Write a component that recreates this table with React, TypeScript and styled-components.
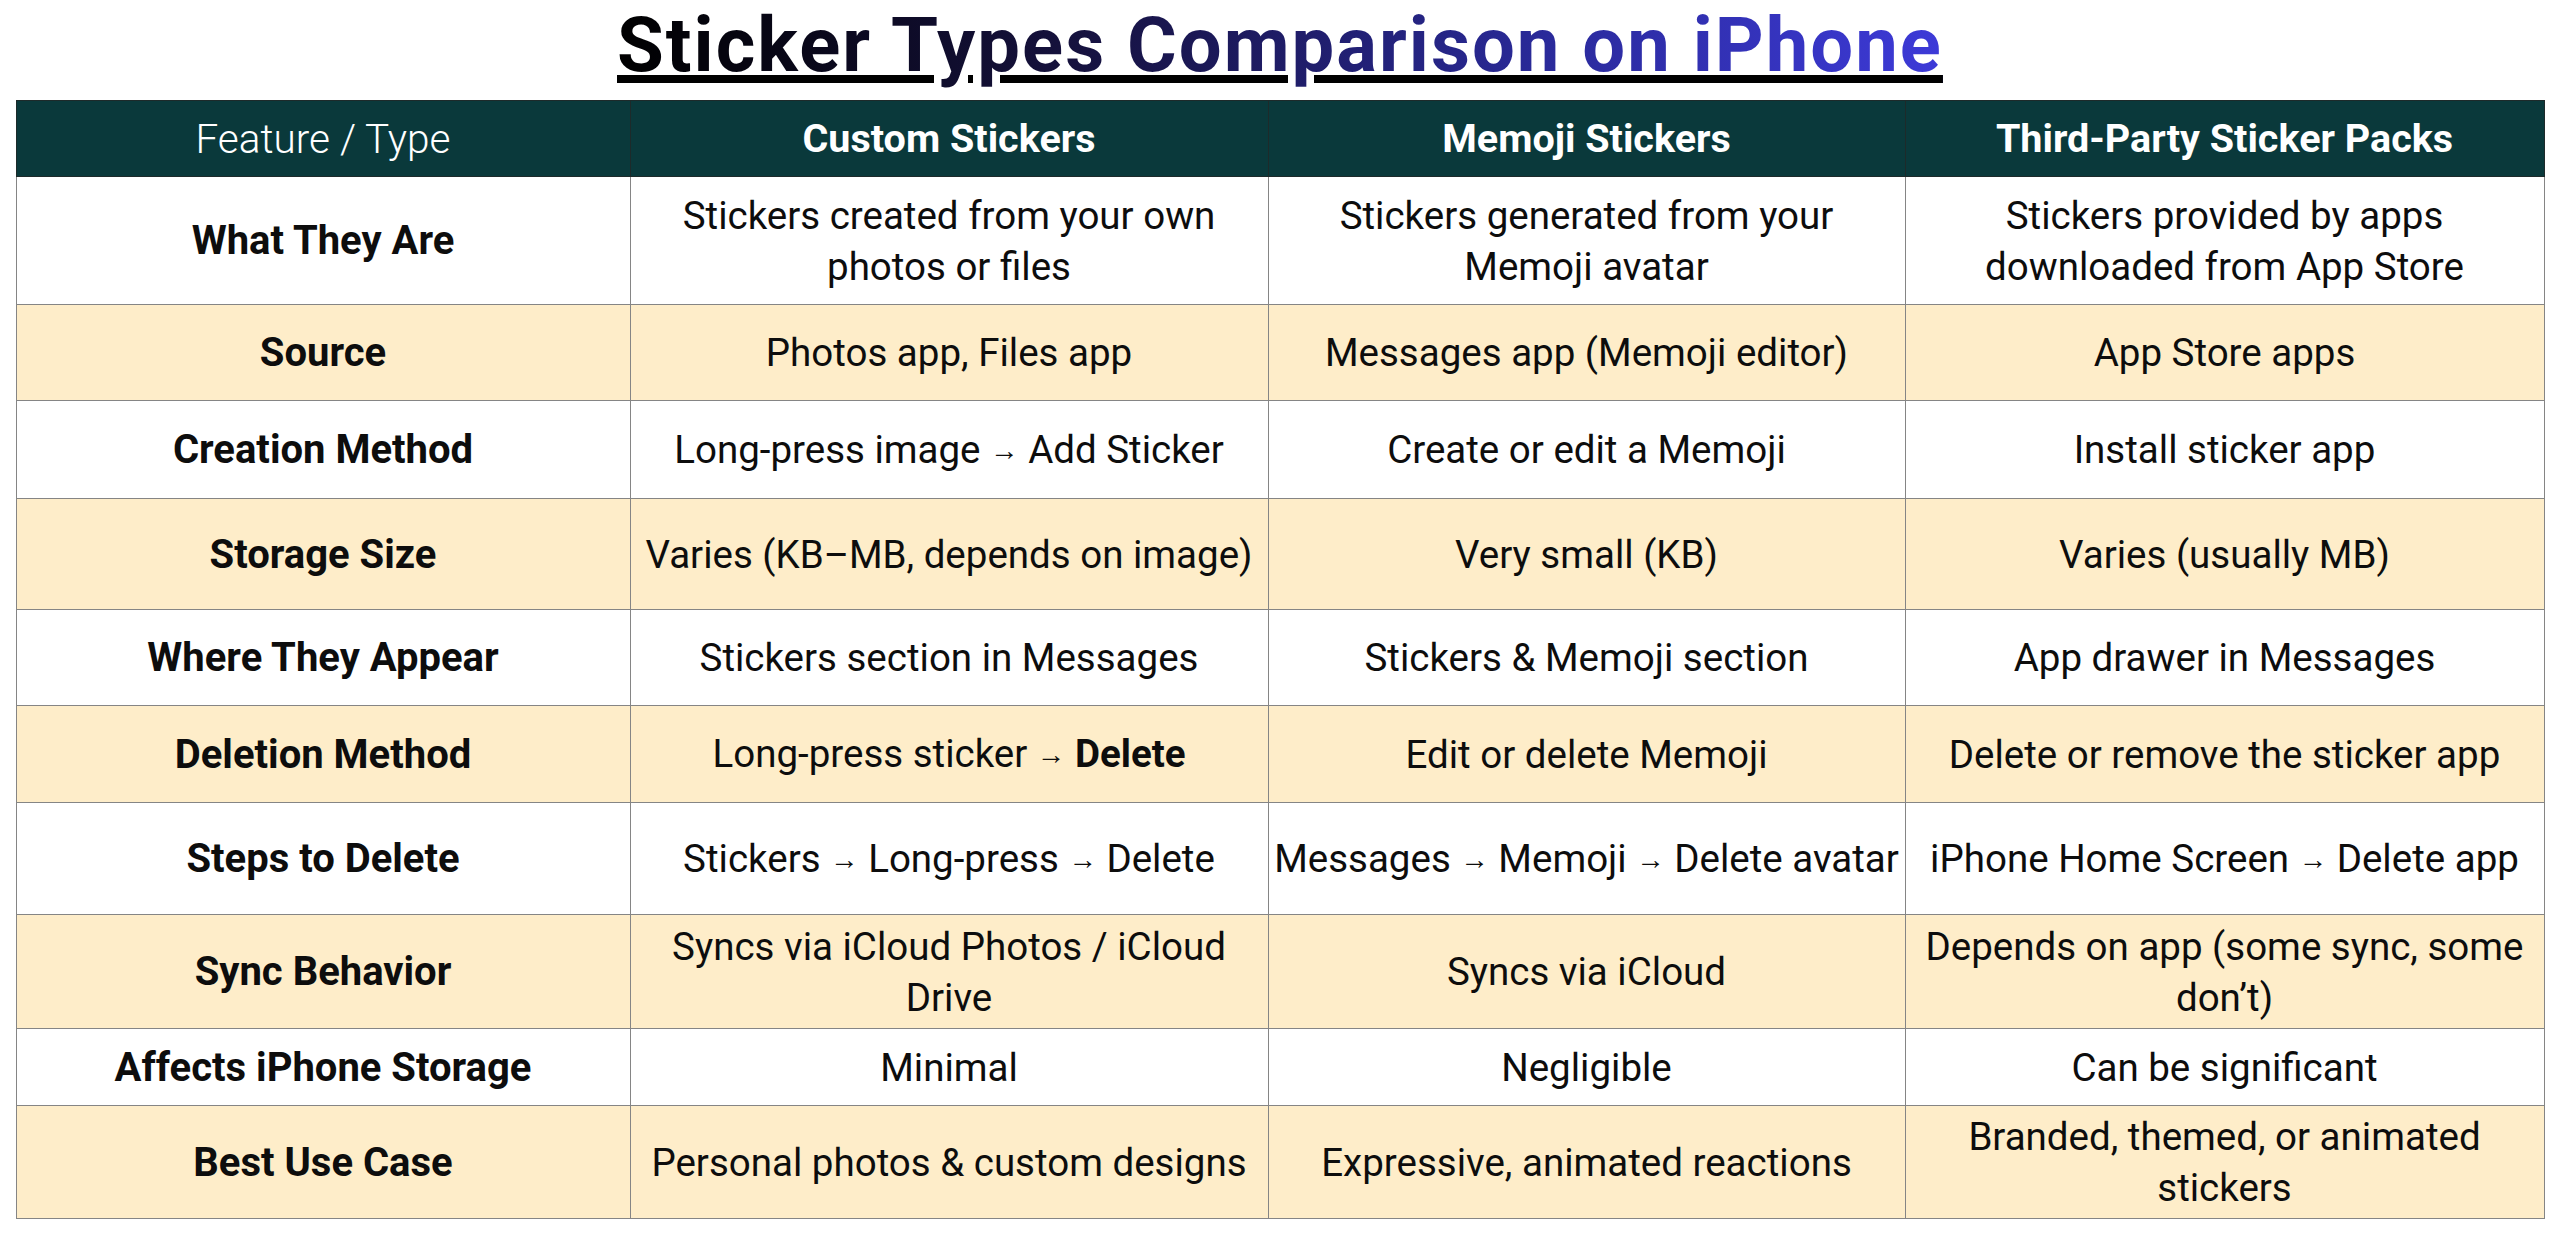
import React from 'react'
import styled, { createGlobalStyle } from 'styled-components'

const GlobalStyle = createGlobalStyle`
  html, body {
    margin: 0;
    padding: 0;
    background: #ffffff;
  }
  body {
    font-family: Roboto, "Liberation Sans", sans-serif;
    color: #111111;
  }
`

const Page = styled.div`
  width: 2560px;
  display: flex;
  flex-direction: column;
  align-items: center;
`

const Title = styled.h1`
  margin: 0 0 10px;
  height: 90px;
  font-family: Roboto, "Liberation Sans", sans-serif;
  font-weight: 700;
  font-size: 76px;
  line-height: 90px;
  letter-spacing: 2px;
  background: linear-gradient(90deg, #000000 0%, #16123f 35%, #2a2a9a 70%, #3d3ad8 100%);
  -webkit-background-clip: text;
  background-clip: text;
  color: transparent;
  text-decoration: underline;
  text-decoration-color: #000000;
  text-decoration-thickness: 8px;
  text-underline-offset: 4px;
  text-decoration-skip-ink: auto;
`

const Table = styled.table`
  width: 2528px;
  border-collapse: collapse;
  table-layout: fixed;
  border: 1px solid #7d7d7d;
`

const HeadRow = styled.tr`
  height: 76px;
  background: #0a393b;
`

const HeadCell = styled.th<{ $light?: boolean }>`
  padding: 0 4px;
  border: 1px solid #1d2a2a;
  color: #ffffff;
  font-size: ${({ $light }) => ($light ? 40.5 : 39.5)}px;
  font-weight: ${({ $light }) => ($light ? 300 : 700)};
  text-align: center;
  vertical-align: middle;
`

const Row = styled.tr<{ $tone: 'plain' | 'warm'; $h: number }>`
  height: ${({ $h }) => $h}px;
  background: ${({ $tone }) => ($tone === 'warm' ? '#feedc9' : '#ffffff')};
`

const Cell = styled.td<{ $label?: boolean }>`
  padding: 0 2px;
  border: 1px solid #858585;
  font-size: ${({ $label }) => ($label ? 40 : 38.5)}px;
  line-height: 51px;
  font-weight: ${({ $label }) => ($label ? 700 : 400)};
  text-align: center;
  vertical-align: middle;
  color: #0d0d0d;
`

const Arrow = styled.span`
  font-size: 0.74em;
  vertical-align: 0.12em;
`

const Strong = styled.b`
  font-weight: 700;
`

// small arrows like the source, everything else as plain text
const withArrows = (text: string) =>
  text.split('→').map((part, i) => (
    <React.Fragment key={i}>
      {i > 0 && <Arrow>→</Arrow>}
      {part}
    </React.Fragment>
  ))

type RowData = { label: string; h: number; cells: React.ReactNode[] }

const rows: RowData[] = [
  {
    label: 'What They Are',
    h: 128,
    cells: [
      'Stickers created from your own photos or files',
      'Stickers generated from your Memoji\u00a0avatar',
      'Stickers provided by apps downloaded from App Store',
    ],
  },
  { label: 'Source', h: 96, cells: ['Photos app, Files app', 'Messages app (Memoji editor)', 'App Store apps'] },
  {
    label: 'Creation Method',
    h: 98,
    cells: [withArrows('Long-press image → Add Sticker'), 'Create or edit a Memoji', 'Install sticker app'],
  },
  {
    label: 'Storage Size',
    h: 111,
    cells: ['Varies (KB–MB, depends on image)', 'Very small (KB)', 'Varies (usually MB)'],
  },
  {
    label: 'Where They Appear',
    h: 96,
    cells: ['Stickers section in Messages', 'Stickers & Memoji section', 'App drawer in Messages'],
  },
  {
    label: 'Deletion Method',
    h: 97,
    cells: [
      <>
        Long-press sticker <Arrow>→</Arrow> <Strong>Delete</Strong>
      </>,
      'Edit or delete Memoji',
      'Delete or remove the sticker app',
    ],
  },
  {
    label: 'Steps to Delete',
    h: 112,
    cells: [
      withArrows('Stickers → Long-press → Delete'),
      withArrows('Messages → Memoji → Delete avatar'),
      withArrows('iPhone Home Screen → Delete app'),
    ],
  },
  {
    label: 'Sync Behavior',
    h: 114,
    cells: [
      'Syncs via iCloud Photos / iCloud Drive',
      'Syncs via iCloud',
      'Depends on app (some sync, some don’t)',
    ],
  },
  { label: 'Affects iPhone Storage', h: 77, cells: ['Minimal', 'Negligible', 'Can be significant'] },
  {
    label: 'Best Use Case',
    h: 113,
    cells: [
      'Personal photos & custom designs',
      'Expressive, animated reactions',
      'Branded, themed, or animated stickers',
    ],
  },
]

export default function App() {
  return (
    <>
      <GlobalStyle />
      <Page>
        <Title>Sticker Types Comparison on iPhone</Title>
        <Table>
          <colgroup>
            <col style={{ width: 614 }} />
            <col style={{ width: 638 }} />
            <col style={{ width: 637 }} />
            <col style={{ width: 639 }} />
          </colgroup>
          <thead>
            <HeadRow>
              <HeadCell $light>Feature / Type</HeadCell>
              <HeadCell>Custom Stickers</HeadCell>
              <HeadCell>Memoji Stickers</HeadCell>
              <HeadCell>Third-Party Sticker Packs</HeadCell>
            </HeadRow>
          </thead>
          <tbody>
            {rows.map((r, i) => (
              <Row key={r.label} $tone={i % 2 === 1 ? 'warm' : 'plain'} $h={r.h}>
                <Cell $label>{r.label}</Cell>
                {r.cells.map((c, j) => (
                  <Cell key={j}>{c}</Cell>
                ))}
              </Row>
            ))}
          </tbody>
        </Table>
      </Page>
    </>
  )
}
